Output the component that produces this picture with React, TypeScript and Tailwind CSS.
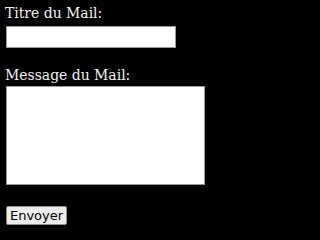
import React from 'react';

export default function App() {
  return (
    <div className="min-h-screen w-full bg-black px-[6px] pt-[4px]">
      <form className="flex flex-col items-start">
        <label className="block text-[15.5px] leading-[18px] text-[#f2f2f2] font-['DejaVu_Serif_Condensed','DejaVu_Serif',serif] -ml-[1px]">
          Titre du Mail:
        </label>
        <input
          type="text"
          className="mt-[4px] h-[22px] w-[170px] border border-[#9a9a9a] bg-white px-1 text-[13px] outline-none"
        />
        <label className="mt-[16px] block text-[15.5px] leading-[22px] text-[#f2f2f2] font-['DejaVu_Serif_Condensed','DejaVu_Serif',serif] -ml-[1px]">
          Message du Mail:
        </label>
        <textarea className="h-[99px] w-[199px] resize-none border border-[#9a9a9a] bg-white text-[13px] outline-none" />
        <button
          type="button"
          className="mt-[21px] h-[19px] w-[61px] rounded-[2px] border border-[#8f8f8f] bg-[#ececec] text-[13px] leading-[17px] text-black font-['DejaVu_Sans',sans-serif]"
        >
          Envoyer
        </button>
      </form>
    </div>
  );
}
